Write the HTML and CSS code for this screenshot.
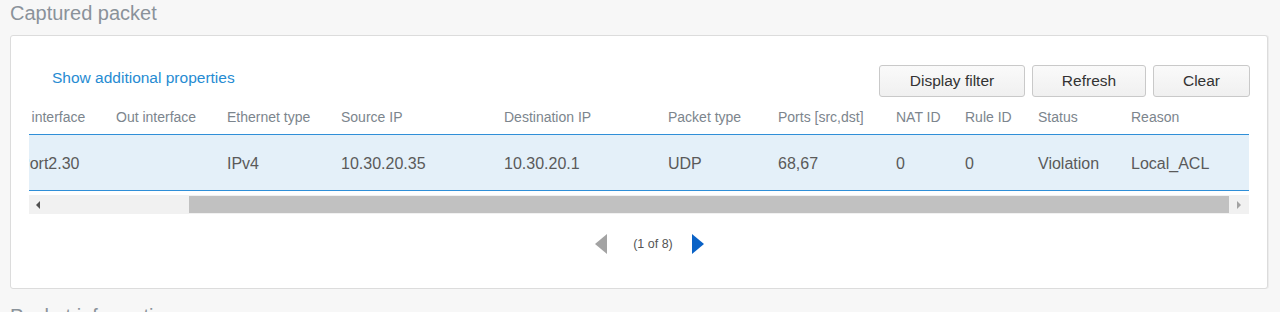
FILE: index.html
```html
<!DOCTYPE html>
<html>
<head>
<meta charset="utf-8">
<link rel="stylesheet" href="styles.css">
</head>
<body>
<div class="page">
  <h2 class="section-title">Captured packet</h2>
  <div class="panel">
    <div class="toolbar">
      <a class="link" href="#">Show additional properties</a>
      <div class="buttons">
        <button class="btn btn-filter">Display filter</button>
        <button class="btn btn-refresh">Refresh</button>
        <button class="btn btn-clear">Clear</button>
      </div>
    </div>
    <div class="viewport">
      <div class="table">
        <div class="row head">
          <div class="cell">In interface</div>
          <div class="cell">Out interface</div>
          <div class="cell">Ethernet type</div>
          <div class="cell">Source IP</div>
          <div class="cell">Destination IP</div>
          <div class="cell">Packet type</div>
          <div class="cell">Ports [src,dst]</div>
          <div class="cell">NAT ID</div>
          <div class="cell">Rule ID</div>
          <div class="cell">Status</div>
          <div class="cell">Reason</div>
        </div>
        <div class="row data">
          <div class="cell">Port2.30</div>
          <div class="cell"></div>
          <div class="cell">IPv4</div>
          <div class="cell">10.30.20.35</div>
          <div class="cell">10.30.20.1</div>
          <div class="cell">UDP</div>
          <div class="cell">68,67</div>
          <div class="cell">0</div>
          <div class="cell">0</div>
          <div class="cell">Violation</div>
          <div class="cell">Local_ACL</div>
        </div>
      </div>
    </div>
    <div class="scrollbar">
      <div class="sb-btn"><span class="tri-left-s"></span></div>
      <div class="sb-space"></div>
      <div class="sb-thumb"></div>
      <div class="sb-btn"><span class="tri-right-s"></span></div>
    </div>
    <div class="pager">
      <span class="pg-prev"></span>
      <span class="pg-text">(1 of 8)</span>
      <span class="pg-next"></span>
    </div>
  </div>
  <h2 class="section-title next">Packet information</h2>
</div>
</body>
</html>
```
FILE: styles.css
```css
html, body {
  margin: 0;
  padding: 0;
  background: #f7f7f7;
  font-family: "Liberation Sans", Arial, sans-serif;
  overflow: hidden;
}
.page {
  width: 1280px;
  height: 312px;
  overflow: hidden;
}
.section-title {
  margin: 1px 0 0 10px;
  font-size: 20px;
  line-height: 24px;
  font-weight: normal;
  color: #8a929a;
}
.section-title.next {
  margin-top: 15px;
}
.panel {
  margin: 10px 0 0 10px;
  height: 252px;
  background: #fff;
  border: 1px solid #dcdcdc;
  border-radius: 3px;
  padding: 0 17px 0 18px;
  box-sizing: content-box;
  box-shadow: 1px 0 0 #ececec;
  width: 1221px;
}
.toolbar {
  display: flex;
  justify-content: space-between;
  align-items: center;
  padding-top: 29px;
  height: 32px;
}
.link {
  margin-left: 23px;
  margin-top: -6px;
  color: #268bd2;
  text-decoration: none;
  font-size: 15.5px;
}
.buttons {
  display: flex;
  gap: 8px;
}
.btn {
  height: 32px;
  border: 1px solid #c9c9c9;
  border-radius: 3px;
  background: linear-gradient(#fafafa, #f0f0f0);
  font-family: inherit;
  font-size: 15.5px;
  color: #333;
  padding: 0;
}
.btn-filter { width: 146px; }
.btn-refresh { width: 114px; margin-left: -1px; }
.btn-clear { width: 97px; margin-left: -1px; }
.viewport {
  overflow: hidden;
  width: 1220px;
}
.table {
  margin-left: -18px;
  width: 1238px;
}
.row {
  display: grid;
  grid-template-columns: 97px 111px 114px 163px 164px 110px 118px 69px 73px 93px 1fr;
  align-items: center;
}
.cell {
  padding-left: 8px;
  padding-top: 2px;
  white-space: nowrap;
}
.head {
  height: 37px;
  border-bottom: 1px solid #2f8fd8;
  font-size: 14px;
  color: #7c858d;
}
.head .cell:first-child { padding-left: 5px; }
.data {
  height: 55px;
  background: #e4f0f9;
  border-bottom: 1px solid #2f8fd8;
  font-size: 16px;
  color: #5a5a5a;
}
.data .cell:first-child { padding-left: 8px; }
.scrollbar {
  margin-top: 4px;
  height: 19px;
  width: 1220px;
  display: flex;
  background: #f1f1f1;
}
.sb-btn {
  width: 20px;
  display: flex;
  align-items: center;
  justify-content: center;
}
.sb-space { width: 140px; }
.sb-thumb {
  width: 1040px;
  height: 17px;
  margin-top: 1px;
  background: #c1c1c1;
}
.tri-left-s {
  width: 0; height: 0;
  border-top: 4px solid transparent;
  border-bottom: 4px solid transparent;
  border-right: 4px solid #505050;
  margin-left: -2px;
}
.tri-right-s {
  width: 0; height: 0;
  border-top: 4px solid transparent;
  border-bottom: 4px solid transparent;
  border-left: 4px solid #a3a3a3;
}
.pager {
  margin-top: 20px;
  display: flex;
  align-items: center;
  justify-content: center;
  padding-left: 20px;
  height: 20px;
}
.pg-prev {
  width: 0; height: 0;
  border-top: 10px solid transparent;
  border-bottom: 10px solid transparent;
  border-right: 12px solid #a3a3a3;
}
.pg-next {
  width: 0; height: 0;
  border-top: 10px solid transparent;
  border-bottom: 10px solid transparent;
  border-left: 12px solid #0a62c6;
}
.pg-text {
  margin: 0 19px 0 26px;
  font-size: 12.5px;
  color: #555;
}
```
